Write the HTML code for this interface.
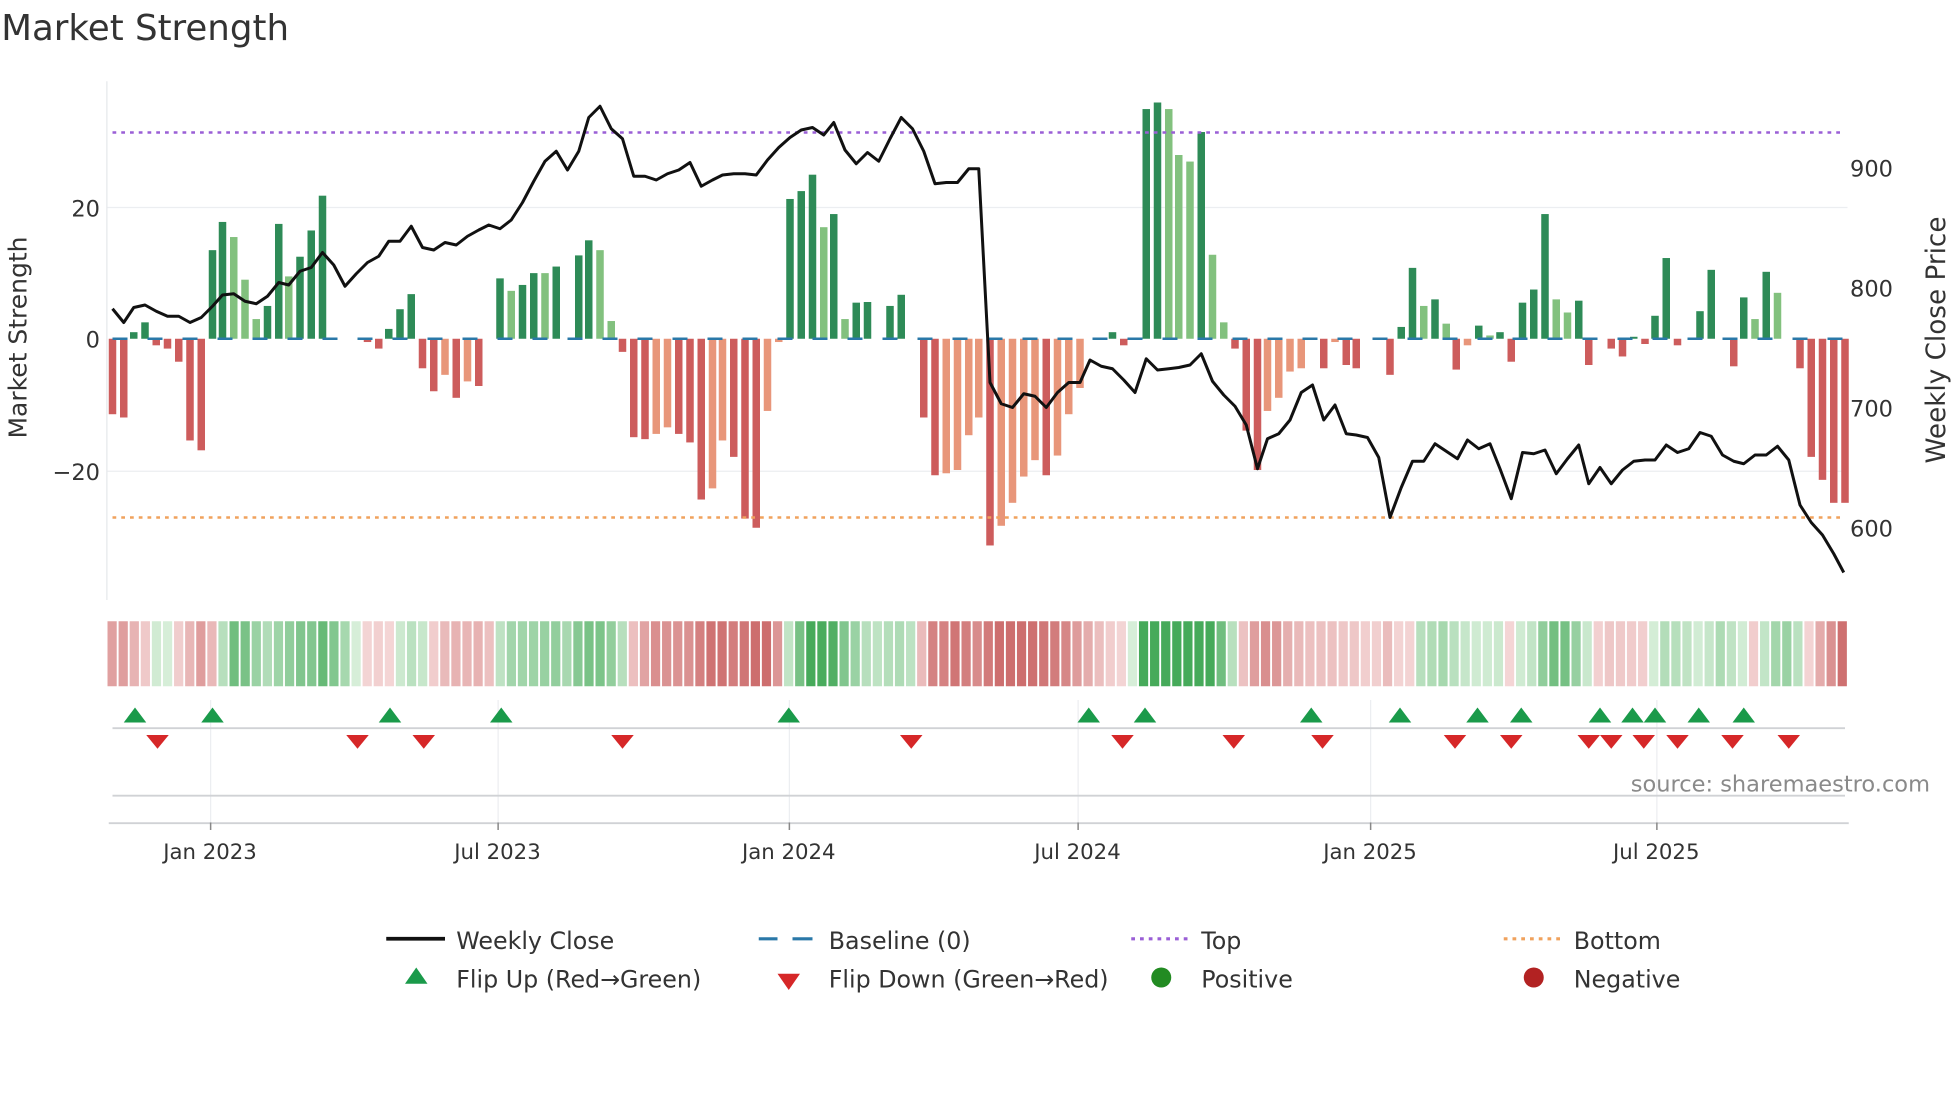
<!DOCTYPE html>
<html><head><meta charset="utf-8"><style>
html,body{margin:0;padding:0;background:#fff;width:1960px;height:1102px;overflow:hidden}
svg{display:block}
text{font-family:"DejaVu Sans","Liberation Sans",sans-serif;fill:#333}
</style></head><body>
<svg id="s" width="1960" height="1102" viewBox="0 0 1568 881.6" xmlns="http://www.w3.org/2000/svg">
<text x="1" y="32" font-size="28.5" fill="#333">Market Strength</text>
<line x1="86" y1="166" x2="1478" y2="166" stroke="#eceef1" stroke-width="1"/>
<line x1="86" y1="377" x2="1478" y2="377" stroke="#eceef1" stroke-width="1"/>
<line x1="85.5" y1="65" x2="85.5" y2="480" stroke="#e6e8eb" stroke-width="1"/>
<g id="bars"></g>
<line x1="90" y1="106" x2="1475" y2="106" stroke="#9a5fd6" stroke-width="2" stroke-dasharray="3,4"/>
<line x1="90" y1="414" x2="1475" y2="414" stroke="#f0a25d" stroke-width="2" stroke-dasharray="3,4"/>
<line x1="90" y1="271" x2="1475" y2="271" stroke="#2a78a8" stroke-width="2" stroke-dasharray="12,16"/>
<polyline id="price" fill="none" stroke="#111" stroke-width="2.4" stroke-linejoin="round"/>
<text x="-270" y="21" font-size="20" transform="rotate(-90)" text-anchor="middle">Market Strength</text>
<text x="80" y="173" font-size="18" text-anchor="end">20</text>
<text x="80" y="278" font-size="18" text-anchor="end">0</text>
<text x="80" y="384" font-size="18" text-anchor="end">−20</text>
<text x="1480" y="141" font-size="18">900</text>
<text x="1480" y="237" font-size="18">800</text>
<text x="1480" y="333" font-size="18">700</text>
<text x="1480" y="429" font-size="18">600</text>
<text x="-272" y="1556" font-size="21" transform="rotate(-90)" text-anchor="middle">Weekly Close Price</text>
<g id="heat"></g>
<g stroke="#eceef1" stroke-width="1">
<line x1="168.5" y1="560" x2="168.5" y2="658"/><line x1="398.5" y1="560" x2="398.5" y2="658"/>
<line x1="631.5" y1="560" x2="631.5" y2="658"/><line x1="862.5" y1="560" x2="862.5" y2="658"/>
<line x1="1096.5" y1="560" x2="1096.5" y2="658"/><line x1="1325.5" y1="560" x2="1325.5" y2="658"/>
</g>
<line x1="90" y1="582.5" x2="1476" y2="582.5" stroke="#d0d2d5" stroke-width="1.5"/>
<line x1="90" y1="636.5" x2="1476" y2="636.5" stroke="#d0d2d5" stroke-width="1.5"/>
<line x1="87" y1="658.5" x2="1479" y2="658.5" stroke="#d0d2d5" stroke-width="1.5"/>
<g id="marks"></g>
<text x="1544" y="633" font-size="18" text-anchor="end" style="fill:#8a8a8a">source: sharemaestro.com</text>
<g stroke="#888" stroke-width="1.2">
<line x1="168.5" y1="658" x2="168.5" y2="664"/><line x1="398.5" y1="658" x2="398.5" y2="664"/>
<line x1="631.5" y1="658" x2="631.5" y2="664"/><line x1="862.5" y1="658" x2="862.5" y2="664"/>
<line x1="1096.5" y1="658" x2="1096.5" y2="664"/><line x1="1325.5" y1="658" x2="1325.5" y2="664"/>
</g>
<g font-size="17" text-anchor="middle">
<text x="168" y="687">Jan 2023</text><text x="398" y="687">Jul 2023</text>
<text x="631" y="687">Jan 2024</text><text x="862" y="687">Jul 2024</text>
<text x="1096" y="687">Jan 2025</text><text x="1325" y="687">Jul 2025</text>
</g>
<g font-size="19">
<line x1="309" y1="751" x2="356" y2="751" stroke="#111" stroke-width="3"/>
<text x="365" y="759">Weekly Close</text>
<line x1="607" y1="751" x2="622" y2="751" stroke="#2a78a8" stroke-width="2.5"/><line x1="634" y1="751" x2="650" y2="751" stroke="#2a78a8" stroke-width="2.5"/>
<text x="663" y="759">Baseline (0)</text>
<line x1="905" y1="751" x2="950" y2="751" stroke="#9a5fd6" stroke-width="2.5" stroke-dasharray="3,4"/>
<text x="961" y="759">Top</text>
<line x1="1203" y1="751" x2="1248" y2="751" stroke="#f0a25d" stroke-width="2.5" stroke-dasharray="3,4"/>
<text x="1259" y="759">Bottom</text>
<polygon points="333,774 342,787 324,787" fill="#1a9a4a"/>
<text x="365" y="790">Flip Up (Red→Green)</text>
<polygon points="622,779 640,779 631,792" fill="#d62728"/>
<text x="663" y="790">Flip Down (Green→Red)</text>
<circle cx="929" cy="782" r="8" fill="#228b22"/>
<text x="961" y="790">Positive</text>
<circle cx="1227" cy="782" r="8" fill="#b22222"/>
<text x="1259" y="790">Negative</text>
</g>
</svg>
<script>
var NS="http://www.w3.org/2000/svg";
function el(t,a,p){var e=document.createElementNS(NS,t);for(var k in a)e.setAttribute(k,a[k]);p.appendChild(e);return e;}
var S="90 -11.5,99 -12,107 1,116 2.5,125 -1,134 -1.5,143 -3.5,152 -15.5,161 -17,170 13.5,178 17.8,187 15.5L,196 9L,205 3L,214 5,223 17.5,231 9.5L,240 12.5,249 16.5,258 21.8,294 -0.5,303 -1.5,311 1.5,320 4.5,329 6.8,338 -4.5,347 -8,356 -5.5L,365 -9,374 -6.5L,383 -7.2,400 9.2,409 7.3L,418 8.2,427 10,436 10L,445 11,463 12.7,471 15,480 13.5L,489 2.7L,498 -2,507 -15,516 -15.3,525 -14.5L,534 -13.5L,543 -14.5,552 -15.8,561 -24.5,570 -22.8L,578 -15.5L,587 -18,596 -27.4,605 -28.8,614 -11L,623 -0.5L,632 21.3,641 22.5,650 25,659 17L,667 19,676 3L,685 5.5,694 5.6,712 5,721 6.7,739 -12,748 -20.8,757 -20.5L,766 -20L,775 -14.7L,783 -12L,792 -31.5,801 -28.5L,810 -25L,819 -21L,828 -18.5L,837 -20.8,846 -17.8L,855 -11.5L,864 -7.5L,890 1,899 -1,917 35,926 36,935 35L,943 28L,952 27L,961 31.5,970 12.8L,979 2.5L,988 -1.5,997 -14,1006 -20,1014 -11L,1023 -9L,1032 -5L,1041 -4.5L,1059 -4.5,1068 -0.5L,1077 -4,1085 -4.5,1112 -5.5,1121 1.8,1130 10.8,1139 5L,1148 6,1157 2.3L,1165 -4.7,1174 -1L,1183 2,1192 0.5L,1200 1,1209 -3.5,1218 5.5,1227 7.5,1236 19,1245 6L,1254 4L,1263 5.8,1271 -4,1289 -1.5,1298 -2.7,1307 0.3,1316 -0.8,1324 3.5,1333 12.3,1342 -1,1360 4.2,1369 10.5,1387 -4.2,1395 6.3,1404 3L,1413 10.2,1422 7L,1440 -4.5,1449 -18,1458 -21.5,1467 -25,1476 -25";
var B=S.split(',').map(function(t){var p=t.split(' ');var l=p[1].indexOf('L')>=0;return [parseFloat(p[0]),parseFloat(p[1]),l];});
var bars=document.getElementById('bars');
B.forEach(function(b){var v=b[1],cx=b[0],h=Math.abs(v)*5.25;
var c=v>0?(b[2]?'#82c17e':'#2e8b57'):(b[2]?'#e8967a':'#cd5c5c');
el('rect',{x:cx-3,y:v>0?271-h:271,width:6,height:h,fill:c},bars);});
function valAt(x){var best=0,bd=1e9;B.forEach(function(b){var d=Math.abs(b[0]-x);if(d<bd){bd=d;best=b[1];}});return bd<5?best:0;}
var heat=document.getElementById('heat');var n=157,hs=(1479-86)/n;
var V=[];for(var i=0;i<n;i++)V.push(valAt(90+i*8.85));
for(var i=0;i<n;i++){var s=(V[i]+(V[i-1]||V[i])+(V[i-2]||V[i]))/3;var a=Math.min(1,Math.abs(s)/22);var col;
if(s>=0){col='rgb('+Math.round(214-144*a)+','+Math.round(238-68*a)+','+Math.round(216-126*a)+')';}
else{col='rgb('+Math.round(244-39*a)+','+Math.round(214-104*a)+','+Math.round(214-104*a)+')';}
el('rect',{x:86+i*hs,y:497,width:hs-1.5,height:52,fill:col},heat);}
var P="90,247 99,258 107,246 116,244 125,249 134,253 143,253 152,258 161,254 170,245 178,236 187,235 196,241 205,243 214,237 223,226 231,228 240,217 249,214 258,202 267,212 276,229 285,219 294,210 303,205 311,193 320,193 329,181 338,198 347,200 356,194 365,196 374,189 383,184 391,180 400,183 409,176 418,162 427,145 436,129 445,121 454,136 463,121 471,94 480,85 489,103 498,111 507,141 516,141 525,144 534,139 543,136 552,130 561,149 570,144 578,140 587,139 596,139 605,140 614,128 623,118 632,110 641,104 650,102 659,108 667,98 676,120 685,131 694,122 703,129 712,111 721,94 730,103 739,121 748,147 757,146 766,146 775,135 783,135 792,306 801,323 810,326 819,315 828,317 837,326 846,314 855,306 864,306 872,288 881,293 890,295 899,304 908,314 917,287 926,296 935,295 943,294 952,292 961,283 970,305 979,316 988,325 997,340 1006,375 1014,351 1023,347 1032,336 1041,314 1050,308 1059,336 1068,324 1077,347 1085,348 1094,350 1103,366 1112,414 1121,390 1130,369 1139,369 1148,355 1157,361 1166,367 1174,352 1183,359 1192,355 1200,375 1209,399 1218,362 1227,363 1236,360 1245,379 1254,367 1263,356 1271,387 1280,374 1289,387 1298,376 1307,369 1316,368 1324,368 1333,356 1342,362 1351,359 1360,346 1369,349 1378,364 1387,369 1395,371 1404,364 1413,364 1422,357 1431,368 1440,404 1449,418 1458,428 1467,443 1475,458";
document.getElementById('price').setAttribute('points',P);
var m=document.getElementById('marks');
[108,170,312,401,631,871,916,1049,1120,1182,1217,1280,1306,1324,1359,1395].forEach(function(x){el('polygon',{points:x+',566 '+(x+9)+',578 '+(x-9)+',578',fill:'#1a9a4a'},m);});
[126,286,339,498,729,898,987,1058,1164,1209,1271,1289,1315,1342,1386,1431].forEach(function(x){el('polygon',{points:(x-9)+',588 '+(x+9)+',588 '+x+',599',fill:'#d62728'},m);});
</script>
</body></html>
